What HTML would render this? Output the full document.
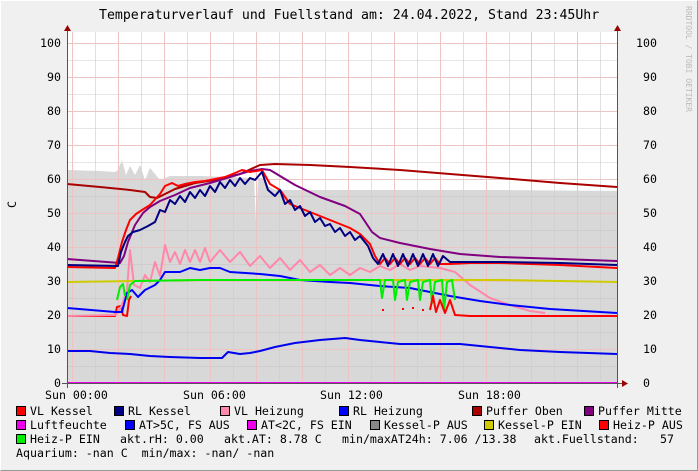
<!DOCTYPE html>
<html><head><meta charset="utf-8"><style>
html,body{margin:0;padding:0}
body{width:698px;height:471px;background:#f0f0f0;position:relative;overflow:hidden;font-family:"DejaVu Sans Mono","Liberation Mono",monospace;font-size:11.6px;color:#000}
.t{position:absolute;white-space:pre;line-height:12px}
.sw{position:absolute;width:8px;height:8px;border:1px solid #000}
</style></head><body>
<div style="position:absolute;left:0;top:0;width:696px;height:469px;border:1px solid #fff;border-right-color:#999;border-bottom-color:#999"></div>
<div class="t" style="left:99px;top:10px;font-size:13.2px">Temperaturverlauf und Fuellstand am: 24.04.2022, Stand 23:45Uhr</div>
<div class="t" style="left:682px;top:6px;font-size:8px;color:#bbb;writing-mode:vertical-rl">RRDTOOL / TOBI OETIKER</div>
<div class="t" style="left:6px;top:201px;writing-mode:vertical-rl;transform:rotate(180deg)">C</div>
<svg style="position:absolute;left:0;top:0" width="698" height="471">
<rect x="67" y="32" width="550" height="351" fill="#fff"/>
<polygon fill="#d8d8d8" points="67,383 67,170 100,171 115,172 118,170 122,160 126,175 130,166 135,175 140,165 145,180 150,168 160,180 170,176 180,176 200,176 230,177 250,178 254,178 256,222 258,178 262,178 268,186 275,190 300,190 400,190 500,190 617,191 617,383"/>
<g stroke-width="1">
<line x1="67" x2="617" y1="60.5" y2="60.5" stroke="#e6e6e6"/><line x1="67" x2="617" y1="94.5" y2="94.5" stroke="#e6e6e6"/><line x1="67" x2="617" y1="128.5" y2="128.5" stroke="#e6e6e6"/><line x1="67" x2="617" y1="162.5" y2="162.5" stroke="#e6e6e6"/><line x1="67" x2="617" y1="196.5" y2="196.5" stroke="#cdcdcd"/><line x1="67" x2="617" y1="230.5" y2="230.5" stroke="#cdcdcd"/><line x1="67" x2="617" y1="264.5" y2="264.5" stroke="#cdcdcd"/><line x1="67" x2="617" y1="298.5" y2="298.5" stroke="#cdcdcd"/><line x1="67" x2="617" y1="332.5" y2="332.5" stroke="#cdcdcd"/><line x1="67" x2="617" y1="366.5" y2="366.5" stroke="#cdcdcd"/>
</g>
<g stroke="#ecc4c4">
<line x1="67" x2="617" y1="43.5" y2="43.5"/><line x1="67" x2="617" y1="77.5" y2="77.5"/><line x1="67" x2="617" y1="111.5" y2="111.5"/><line x1="67" x2="617" y1="145.5" y2="145.5"/><line x1="67" x2="617" y1="179.5" y2="179.5"/><line x1="67" x2="617" y1="213.5" y2="213.5"/><line x1="67" x2="617" y1="247.5" y2="247.5"/><line x1="67" x2="617" y1="281.5" y2="281.5"/><line x1="67" x2="617" y1="315.5" y2="315.5"/><line x1="67" x2="617" y1="349.5" y2="349.5"/>
</g>
<g stroke="#cdcdcd" opacity=".6">
<line x1="95.5" x2="95.5" y1="32" y2="383"/><line x1="141.5" x2="141.5" y1="32" y2="383"/><line x1="187.5" x2="187.5" y1="32" y2="383"/><line x1="233.5" x2="233.5" y1="32" y2="383"/><line x1="279.5" x2="279.5" y1="32" y2="383"/><line x1="325.5" x2="325.5" y1="32" y2="383"/><line x1="371.5" x2="371.5" y1="32" y2="383"/><line x1="417.5" x2="417.5" y1="32" y2="383"/><line x1="463.5" x2="463.5" y1="32" y2="383"/><line x1="509.5" x2="509.5" y1="32" y2="383"/><line x1="554.5" x2="554.5" y1="32" y2="383"/><line x1="600.5" x2="600.5" y1="32" y2="383"/>
</g>
<g stroke="#ecc4c4">
<line x1="72.5" x2="72.5" y1="32" y2="383"/><line x1="118.5" x2="118.5" y1="32" y2="383"/><line x1="164.5" x2="164.5" y1="32" y2="383"/><line x1="210.5" x2="210.5" y1="32" y2="383"/><line x1="256.5" x2="256.5" y1="32" y2="383"/><line x1="302.5" x2="302.5" y1="32" y2="383"/><line x1="348.5" x2="348.5" y1="32" y2="383"/><line x1="394.5" x2="394.5" y1="32" y2="383"/><line x1="440.5" x2="440.5" y1="32" y2="383"/><line x1="486.5" x2="486.5" y1="32" y2="383"/><line x1="531.5" x2="531.5" y1="32" y2="383"/><line x1="577.5" x2="577.5" y1="32" y2="383"/>
</g>
<g fill="none" stroke-width="2" stroke-linejoin="round">
<polyline stroke="#ff0000" points="67,316 115,316 117,307 121,306 123,315 127,316 129,300 131,296"/>
<polyline stroke="#ff88aa" points="67,316 115,315 118,312 122,305 127,290 130,250 134,285 140,288 145,275 150,282 155,262 160,276 165,245 170,262 175,252 180,264 185,250 190,262 195,250 200,262 205,248 210,262 220,250 230,262 240,252 250,266 260,256 270,268 280,258 290,270 300,260 310,272 320,265 330,275 340,268 350,275 360,268 370,272 380,266 390,270 400,264 410,270 420,266 440,268 455,272 470,285 490,298 510,305 530,311 545,313"/>
<polyline stroke="#cccc00" points="67,282 200,280 380,280 500,280 617,282"/>
<polyline stroke="#0000ff" points="67,308 115,312 122,312 127,293 132,290 138,297 145,290 155,285 160,280 165,272 180,272 190,268 200,270 210,268 220,268 230,272 260,274 280,276 300,280 330,282 350,283 380,286 410,288 430,292 450,296 480,301 510,305 550,309 617,313"/>
<polyline stroke="#00ee00" points="117,300 120,287 123,284 125,296"/>
<polyline stroke="#00ee00" points="127,300 130,285 135,281 200,280 300,280 380,280 382,298 385,280 393,280 395,300 398,282 405,280 407,300 410,282 418,280 420,300 423,282 430,280 432,303 435,282 442,280 444,310 447,282 452,280 455,300"/>
<g stroke="#ff0000"><line x1="382" x2="384" y1="310" y2="310"/><line x1="402" x2="404" y1="309" y2="309"/><line x1="412" x2="414" y1="308" y2="308"/><line x1="422" x2="424" y1="310" y2="310"/></g>
<polyline stroke="#ff0000" points="430,310 433,296 436,312 440,300 445,313 450,300 455,315 470,316 617,316"/>
<polyline stroke="#0000ee" points="67,351 90,351 110,353 130,354 150,356 170,357 200,358 222,358 228,352 240,354 250,353 260,351 275,347 295,343 320,340 345,338 360,340 380,342 400,344 430,344 460,344 490,347 520,350 560,352 617,354"/>
<polyline stroke="#aa0000" points="67,184 100,187 130,190 145,192 150,197 157,198 165,194 175,189 195,183 215,180 240,174 260,165 275,164 310,165 350,167 400,170 450,174 500,178 560,183 617,187"/>
<polyline stroke="#800080" points="67,259 120,263 124,256 128,242 135,225 143,213 150,207 160,201 175,195 190,188 210,183 230,177 250,171 262,169 270,170 280,176 295,185 320,197 345,206 360,214 372,232 380,238 400,243 430,249 460,254 500,257 560,259 617,261"/>
<polyline stroke="#ff0000" points="67,267 115,268 118,258 122,242 126,230 130,220 136,214 142,210 150,205 160,194 165,186 172,183 178,186 185,184 195,182 205,181 215,179 225,177 235,173 242,170 250,172 262,170 270,184 280,190 290,204 300,208 310,212 320,216 330,220 340,224 350,228 360,234 370,244 375,256 380,264 385,258 390,264 395,258 400,264 405,258 410,264 415,258 420,264 425,258 430,264 435,258 440,264 450,264 470,263 500,263 560,265 617,268"/>
<polyline stroke="#000080" points="67,265 118,266 121,252 125,242 128,236 133,232 140,230 148,226 155,222 160,210 165,212 170,200 175,204 180,196 185,202 190,192 195,198 200,190 205,196 210,186 215,192 220,182 225,188 230,180 235,186 240,178 245,184 250,178 255,180 262,172 268,190 275,196 280,190 285,204 290,200 295,210 300,206 305,216 310,212 315,222 320,218 325,226 330,224 335,232 340,228 345,236 350,232 355,240 360,236 368,246 373,258 378,264 383,254 388,266 393,254 398,266 403,254 408,266 413,254 418,266 423,254 428,266 433,254 438,266 443,256 450,262 470,262 500,262 560,263 617,265"/>
<line x1="67" x2="617" y1="383" y2="383" stroke="#ee00ee"/>
</g>
<line x1="67.5" x2="67.5" y1="30" y2="388" stroke="#555"/>
<line x1="617.5" x2="617.5" y1="30" y2="388" stroke="#555"/>
<line x1="62" x2="622" y1="383.5" y2="383.5" stroke="#555"/>
<polygon points="64,31 71,31 67.5,25" fill="#900"/>
<polygon points="614,31 621,31 617.5,25" fill="#900"/>
<polygon points="622,380 622,387 628,383.5" fill="#900"/>
</svg>
<div class="t" style="left:40px;top:37px">100</div><div class="t" style="left:47px;top:71px">90</div><div class="t" style="left:47px;top:105px">80</div><div class="t" style="left:47px;top:139px">70</div><div class="t" style="left:47px;top:173px">60</div><div class="t" style="left:47px;top:207px">50</div><div class="t" style="left:47px;top:241px">40</div><div class="t" style="left:47px;top:275px">30</div><div class="t" style="left:47px;top:309px">20</div><div class="t" style="left:47px;top:343px">10</div><div class="t" style="left:54px;top:377px">0</div>
<div class="t" style="left:636px;top:37px">100</div><div class="t" style="left:643px;top:71px">90</div><div class="t" style="left:643px;top:105px">80</div><div class="t" style="left:643px;top:139px">70</div><div class="t" style="left:643px;top:173px">60</div><div class="t" style="left:643px;top:207px">50</div><div class="t" style="left:643px;top:241px">40</div><div class="t" style="left:643px;top:275px">30</div><div class="t" style="left:643px;top:309px">20</div><div class="t" style="left:643px;top:343px">10</div><div class="t" style="left:643px;top:377px">0</div>
<div class="t" style="left:45px;top:389px">Sun 00:00</div><div class="t" style="left:183px;top:389px">Sun 06:00</div><div class="t" style="left:320px;top:389px">Sun 12:00</div><div class="t" style="left:458px;top:389px">Sun 18:00</div>

<div class="sw" style="left:16px;top:406px;background:#f00"></div><div class="t" style="left:30px;top:405px">VL Kessel</div>
<div class="sw" style="left:114px;top:406px;background:#000080"></div><div class="t" style="left:128px;top:405px">RL Kessel</div>
<div class="sw" style="left:220px;top:406px;background:#ff88aa"></div><div class="t" style="left:234px;top:405px">VL Heizung</div>
<div class="sw" style="left:339px;top:406px;background:#00f"></div><div class="t" style="left:353px;top:405px">RL Heizung</div>
<div class="sw" style="left:472px;top:406px;background:#aa0000"></div><div class="t" style="left:486px;top:405px">Puffer Oben</div>
<div class="sw" style="left:584px;top:406px;background:#800080"></div><div class="t" style="left:598px;top:405px">Puffer Mitte</div>

<div class="sw" style="left:16px;top:420px;background:#ee00ee"></div><div class="t" style="left:30px;top:419px">Luftfeuchte</div>
<div class="sw" style="left:125px;top:420px;background:#00f"></div><div class="t" style="left:139px;top:419px">AT&gt;5C, FS AUS</div>
<div class="sw" style="left:247px;top:420px;background:#ee00ee"></div><div class="t" style="left:261px;top:419px">AT&lt;2C, FS EIN</div>
<div class="sw" style="left:370px;top:420px;background:#888"></div><div class="t" style="left:384px;top:419px">Kessel-P AUS</div>
<div class="sw" style="left:484px;top:420px;background:#cccc00"></div><div class="t" style="left:498px;top:419px">Kessel-P EIN</div>
<div class="sw" style="left:599px;top:420px;background:#f00"></div><div class="t" style="left:613px;top:419px">Heiz-P AUS</div>

<div class="sw" style="left:16px;top:434px;background:#00ee00"></div><div class="t" style="left:30px;top:433px">Heiz-P EIN</div>
<div class="t" style="left:120px;top:433px">akt.rH: 0.00</div>
<div class="t" style="left:224px;top:433px">akt.AT: 8.78 C</div>
<div class="t" style="left:342px;top:433px">min/maxAT24h: 7.06 /13.38</div>
<div class="t" style="left:534px;top:433px">akt.Fuellstand:</div>
<div class="t" style="left:660px;top:433px">57</div>
<div class="t" style="left:16px;top:447px">Aquarium: -nan C  min/max: -nan/ -nan</div>
</body></html>
